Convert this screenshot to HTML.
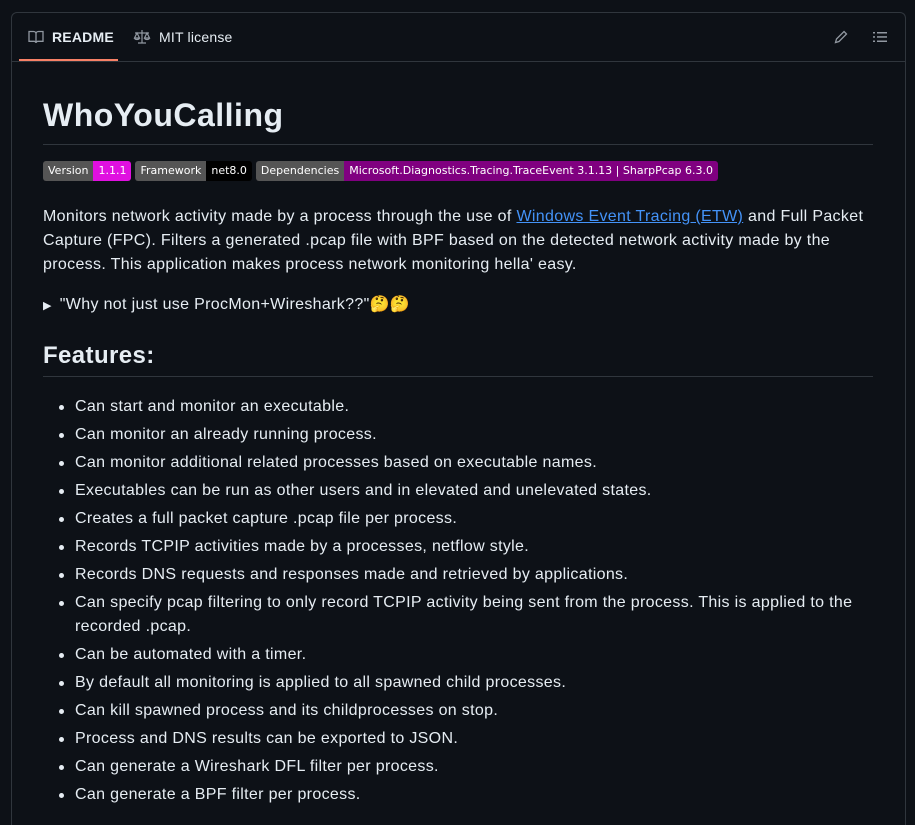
<!DOCTYPE html>
<html><head><meta charset="utf-8"><style>
*{margin:0;padding:0;box-sizing:border-box}
html{width:915px;height:825px;overflow:hidden;background:#0d1117}
body{width:915px;height:825px;background:#0d1117;color:#e6edf3;font-family:"Liberation Sans","DejaVu Sans",sans-serif;font-size:16px;overflow:hidden;position:relative;letter-spacing:0.33px}
.card{position:absolute;left:11px;top:12px;width:895px;height:813px;border:1px solid #30363d;border-bottom:none;border-radius:6px 6px 0 0}
.hdr{position:absolute;left:0;top:0;right:0;height:49px;border-bottom:1px solid #30363d}
.tab{position:absolute;top:16px;font-size:14px;display:flex;align-items:center;gap:8px;letter-spacing:0.2px}
.ab{position:absolute;white-space:nowrap}
.badges{position:absolute;left:43px;top:161px;display:flex;gap:4px;font-family:"DejaVu Sans",sans-serif;font-size:11px;height:20px;letter-spacing:0}
.b{display:flex;border-radius:3px;overflow:hidden;height:20px;line-height:20px}
.b span{padding:0 5px;color:#fff}
.l{background:#555}
p.ab{line-height:24px}
a{color:#4493f8;text-decoration:underline}
li{position:absolute;left:75px;list-style:none;white-space:nowrap;line-height:24px}
li:before{content:"";position:absolute;left:-16px;top:10px;width:5px;height:5px;border-radius:50%;background:#e6edf3}
</style></head><body>
<div class="card">
<div class="hdr">
<div style="position:absolute;left:7px;top:46px;width:99px;height:2px;background:#f78166"></div>
<div class="tab" style="left:16px;font-weight:bold">
<svg width="16" height="16" viewBox="0 0 16 16" fill="none" stroke="#9198a1" stroke-width="1.3"><path d="M1 2.5h4.5c1.4 0 2.5 1 2.5 2.3V14c0-1-1-1.7-2-1.7H1zM15 2.5h-4.5C9.1 2.5 8 3.5 8 4.8V14c0-1 1-1.7 2-1.7h5z"/></svg>README</div>
<div class="tab" style="left:121px">
<svg width="18" height="16" viewBox="0 0 18 16" fill="none" stroke="#9198a1" stroke-width="1.2"><path d="M9 1v13M5 14h8M2 4h14M4 4l-2.5 5h5zM14 4l-2.5 5h5zM1.5 9a2.5 1.5 0 0 0 5 0M11.5 9a2.5 1.5 0 0 0 5 0"/></svg>MIT license</div>
<svg style="position:absolute;left:821px;top:16px" width="16" height="16" viewBox="0 0 16 16" fill="none" stroke="#9198a1" stroke-width="1.3"><path d="M11 2.5l2.5 2.5L6 12.5 2.5 13.5 3.5 10z"/></svg>
<svg style="position:absolute;left:860px;top:16px" width="16" height="16" viewBox="0 0 16 16" fill="#9198a1"><rect x="1" y="3" width="2" height="1.5"/><rect x="5" y="3" width="10" height="1.5"/><rect x="1" y="7.2" width="2" height="1.5"/><rect x="5" y="7.2" width="10" height="1.5"/><rect x="1" y="11.5" width="2" height="1.5"/><rect x="5" y="11.5" width="10" height="1.5"/></svg>
</div>
</div>
<div class="ab" style="left:43px;top:95px;font-size:32px;font-weight:bold;line-height:40px;letter-spacing:0.5px">WhoYouCalling</div>
<div style="position:absolute;left:43px;top:144px;width:830px;height:1px;background:#30363d"></div>
<div class="badges">
<div class="b"><span class="l">Version</span><span style="background:#e010e0">1.1.1</span></div>
<div class="b"><span class="l">Framework</span><span style="background:#000">net8.0</span></div>
<div class="b"><span class="l">Dependencies</span><span style="background:#800080">Microsoft.Diagnostics.Tracing.TraceEvent 3.1.13 | SharpPcap 6.3.0</span></div>
</div>
<p class="ab" style="left:43px;top:205px">Monitors network activity made by a process through the use of <a>Windows Event Tracing (ETW)</a> and Full Packet</p>
<p class="ab" style="left:43px;top:229px">Capture (FPC). Filters a generated .pcap file with BPF based on the detected network activity made by the</p>
<p class="ab" style="left:43px;top:253px">process. This application makes process network monitoring hella' easy.</p>
<p class="ab" style="left:43px;top:293px"><span style="font-size:11px;margin-right:8px">▶</span>"Why not just use ProcMon+Wireshark??"🤔🤔</p>
<div class="ab" style="left:43px;top:341px;font-size:24px;font-weight:bold;line-height:30px;letter-spacing:0.4px">Features:</div>
<div style="position:absolute;left:43px;top:376px;width:830px;height:1px;background:#30363d"></div>
<ul>
<li style="top:395px">Can start and monitor an executable.</li>
<li style="top:423px">Can monitor an already running process.</li>
<li style="top:451px">Can monitor additional related processes based on executable names.</li>
<li style="top:479px">Executables can be run as other users and in elevated and unelevated states.</li>
<li style="top:507px">Creates a full packet capture .pcap file per process.</li>
<li style="top:535px">Records TCPIP activities made by a processes, netflow style.</li>
<li style="top:563px">Records DNS requests and responses made and retrieved by applications.</li>
<li style="top:591px">Can specify pcap filtering to only record TCPIP activity being sent from the process. This is applied to the<br>recorded .pcap.</li>
<li style="top:643px">Can be automated with a timer.</li>
<li style="top:671px">By default all monitoring is applied to all spawned child processes.</li>
<li style="top:699px">Can kill spawned process and its childprocesses on stop.</li>
<li style="top:727px">Process and DNS results can be exported to JSON.</li>
<li style="top:755px">Can generate a Wireshark DFL filter per process.</li>
<li style="top:783px">Can generate a BPF filter per process.</li>
</ul>
</body></html>
